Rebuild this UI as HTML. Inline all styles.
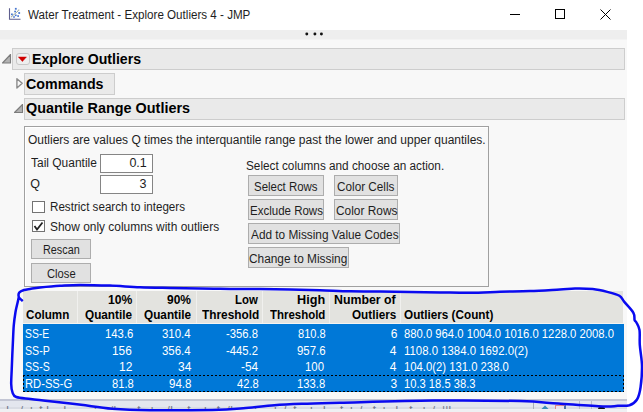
<!DOCTYPE html>
<html><head><meta charset="utf-8"><style>
html,body{margin:0;padding:0;width:643px;height:412px;overflow:hidden;background:#fff;position:relative}
.t{position:absolute;white-space:nowrap;line-height:0;font-family:"Liberation Sans",sans-serif;transform-origin:0 0}
.b{position:absolute;box-sizing:border-box}
</style></head><body>
<!-- title bar -->
<div class="b" style="left:0;top:0;width:643px;height:30px;background:#fff"></div>
<!-- app icon -->
<svg class="b" style="left:5px;top:4px" width="20" height="20" viewBox="0 0 20 20">
<path d="M4.5 4.3 V15.3 H15.5" fill="none" stroke="#5e5e8e" stroke-width="1.1"/>
<path d="M6.3 13.1 L14.6 5.3" stroke="#8a9a8a" stroke-width="1.1" stroke-dasharray="1 0.6"/>
<g fill="#4a78d0"><rect x="9.9" y="3.9" width="1.8" height="1.8"/><rect x="9.2" y="6.7" width="1.8" height="1.6"/><rect x="13.3" y="8.1" width="1.8" height="1.8"/><rect x="6" y="9.5" width="1.8" height="1.7"/><rect x="9.9" y="10.5" width="1.7" height="1.6"/><rect x="12.3" y="11.2" width="1.7" height="1.7"/><rect x="8.2" y="12.2" width="1.6" height="1.6"/></g>
</svg>
<!-- window controls -->
<div class="b" style="left:510px;top:14px;width:10px;height:1px;background:#000"></div>
<div class="b" style="left:555px;top:9px;width:10px;height:10px;border:1px solid #000"></div>
<svg class="b" style="left:600px;top:9px" width="11" height="11" viewBox="0 0 11 11"><path d="M0.5 0.5 L10.5 10.5 M10.5 0.5 L0.5 10.5" stroke="#000" stroke-width="1"/></svg>
<!-- toolbar band -->
<div class="b" style="left:0;top:30px;width:627px;height:9px;background:#eeeeee"></div>
<div class="b" style="left:0;top:39px;width:627px;height:1px;background:#f3f3f3"></div>
<svg class="b" style="left:300px;top:28px" width="30" height="12"><g fill="#111"><circle cx="6.8" cy="6" r="1.45"/><circle cx="14.9" cy="6" r="1.45"/><circle cx="21.4" cy="6" r="1.45"/></g></svg>
<!-- content bg -->
<div class="b" style="left:0;top:40px;width:627px;height:359px;background:#f8f8f8"></div>
<!-- outline header boxes -->
<div class="b" style="left:12px;top:48px;width:613px;height:22px;background:#eaeaea;border:1px solid #cdcdcd"></div>
<div class="b" style="left:24px;top:73px;width:91px;height:22px;background:#eaeaea;border:1px solid #cdcdcd"></div>
<div class="b" style="left:24px;top:98px;width:601px;height:22px;background:#eaeaea;border:1px solid #cdcdcd"></div>
<!-- disclosure triangles -->
<svg class="b" style="left:0;top:50px" width="14" height="16"><path d="M2.5 13 L10.5 4.5 L10.5 13 Z" fill="#b2b2b2" stroke="#7c7c7c" stroke-width="1.1" stroke-linejoin="round"/></svg>
<svg class="b" style="left:13px;top:76px" width="12" height="16"><path d="M3.9 2.7 L9.2 7.3 L3.9 12 Z" fill="none" stroke="#8c8c8c" stroke-width="1.4" stroke-linejoin="round"/></svg>
<svg class="b" style="left:12px;top:100px" width="14" height="16"><path d="M2.5 12.5 L10.5 4.5 L10.5 12.5 Z" fill="#b2b2b2" stroke="#7c7c7c" stroke-width="1.1" stroke-linejoin="round"/></svg>
<!-- red triangle button -->
<div class="b" style="left:16px;top:53px;width:14px;height:12px;border:1px solid #c8c8c8;border-radius:3px;background:#efefef"></div>
<svg class="b" style="left:16px;top:53px" width="14" height="12"><path d="M2.3 3.9 L10.5 3.9 L6.4 8.6 Z" fill="#d00000" stroke="#d00000" stroke-width="0.4" stroke-linejoin="round"/></svg>
<!-- panel -->
<div class="b" style="left:24px;top:126px;width:465px;height:161px;border:1px solid #a0a0a0;background:#f8f8f8;box-shadow:inset 1px 1px 0 #fff"></div>
<!-- text boxes -->
<div class="b" style="left:100px;top:154px;width:53px;height:19px;border:1px solid #858585;background:#fff"></div>
<div class="b" style="left:100px;top:175px;width:53px;height:19px;border:1px solid #858585;background:#fff"></div>
<!-- checkboxes -->
<div class="b" style="left:32px;top:201px;width:13px;height:12px;border:1px solid #737373;background:#fff"></div>
<div class="b" style="left:32px;top:220px;width:13px;height:12px;border:1px solid #737373;background:#fff"></div>
<svg class="b" style="left:32px;top:220px" width="13" height="12"><path d="M2.5 6 L5 9.5 L10.5 2.5" fill="none" stroke="#222" stroke-width="1.8"/></svg>
<!-- buttons -->
<div class="b" style="left:31px;top:239px;width:60px;height:20px;border:1px solid #adadad;background:#e1e1e1"></div>
<div class="b" style="left:31px;top:263px;width:60px;height:20px;border:1px solid #adadad;background:#e1e1e1"></div>
<div class="b" style="left:248px;top:175px;width:76px;height:21px;border:1px solid #adadad;background:#e1e1e1"></div>
<div class="b" style="left:334px;top:175px;width:64px;height:21px;border:1px solid #adadad;background:#e1e1e1"></div>
<div class="b" style="left:248px;top:199px;width:76px;height:21px;border:1px solid #adadad;background:#e1e1e1"></div>
<div class="b" style="left:334px;top:199px;width:64px;height:21px;border:1px solid #adadad;background:#e1e1e1"></div>
<div class="b" style="left:248px;top:223px;width:152px;height:21px;border:1px solid #adadad;background:#e1e1e1"></div>
<div class="b" style="left:248px;top:247px;width:101px;height:21px;border:1px solid #adadad;background:#e1e1e1"></div>
<!-- table header -->
<div class="b" style="left:23px;top:291px;width:600px;height:32px;background:#e3e3df"></div>
<div class="b" style="left:23px;top:323px;width:601px;height:1px;background:#f4f4f2"></div>
<div class="b" style="left:77px;top:291px;width:1px;height:32px;background:#f0f0ee"></div>
<div class="b" style="left:136px;top:291px;width:1px;height:32px;background:#f0f0ee"></div>
<div class="b" style="left:196px;top:291px;width:1px;height:32px;background:#f0f0ee"></div>
<div class="b" style="left:262px;top:291px;width:1px;height:32px;background:#f0f0ee"></div>
<div class="b" style="left:329px;top:291px;width:1px;height:32px;background:#f0f0ee"></div>
<div class="b" style="left:400px;top:291px;width:1px;height:32px;background:#f0f0ee"></div>
<!-- rows -->
<div class="b" style="left:23px;top:324px;width:601px;height:68px;background:#0078d7"></div>
<div class="b" style="left:23px;top:375px;width:601px;height:1px;background:repeating-linear-gradient(90deg,#000 0 2px,transparent 2px 4px)"></div>
<div class="b" style="left:23px;top:391px;width:601px;height:1px;background:repeating-linear-gradient(90deg,#000 0 2px,transparent 2px 4px)"></div>
<div class="b" style="left:23px;top:375px;width:1px;height:17px;background:repeating-linear-gradient(180deg,#000 0 2px,transparent 2px 4px)"></div>
<div class="b" style="left:623px;top:375px;width:1px;height:17px;background:repeating-linear-gradient(180deg,#000 0 2px,transparent 2px 4px)"></div>
<!-- status bar -->
<div class="b" style="left:0;top:399px;width:627px;height:2px;background:#c3c6d4"></div>
<div class="b" style="left:0;top:401px;width:627px;height:7.5px;background:#e3e6ee"></div>
<div class="b" style="left:0;top:408.5px;width:627px;height:3.5px;background:#eff0f3"></div>
<div class="b" style="left:0;top:407px;width:627px;height:1.5px;background:#d9dce4"></div>
<div class="b" style="left:0;top:405.5px;width:520px;height:3px;overflow:hidden;opacity:0.7">
<div class="t" style="left:6px;top:4.6px;font-size:12px;color:#4a5068;white-space:pre">F  /  i  t F   F       i    /F     t   i    /F   t    i   t  /F     t     i  /  t    i   F   t  i  /   t  i   F  t   i  /  ||F</div>
</div>
<div class="b" style="left:533px;top:401px;width:1px;height:7.5px;background:#a8acb8"></div>
<div class="b" style="left:579px;top:401px;width:1px;height:7.5px;background:#b8bcc8"></div>
<div class="b" style="left:591px;top:401px;width:1px;height:7.5px;background:#b8bcc8"></div>
<div class="b" style="left:0;top:401px;width:627px;height:7.5px;overflow:hidden">
<svg style="position:absolute;left:538px;top:3px" width="14" height="9"><path d="M1.5 8.5 L7 3 L12.5 8.5" fill="none" stroke="#3a8ab8" stroke-width="2.2"/></svg>
<div class="b" style="left:555px;top:3.5px;width:11px;height:8px;border:1px solid #e08a8a;border-right:2px solid #5070a0;background:#ece4ea"></div>
<div class="b" style="left:597.5px;top:5.5px;width:7.5px;height:4px;background:#111;border-radius:3px"></div>
</div>

<div class="t" style="left:28.00px;top:14.56px;font-size:12.5px;font-weight:normal;color:#1e1e1e;transform:scaleX(0.9297);">Water Treatment - Explore Outliers 4 - JMP</div>
<div class="t" style="left:32.06px;top:59.00px;font-size:15px;font-weight:bold;color:#000;transform:scaleX(0.9412);">Explore Outliers</div>
<div class="t" style="left:25.85px;top:84.00px;font-size:15px;font-weight:bold;color:#000;transform:scaleX(0.9488);">Commands</div>
<div class="t" style="left:25.84px;top:108.20px;font-size:15px;font-weight:bold;color:#000;transform:scaleX(0.9598);">Quantile Range Outliers</div>
<div class="t" style="left:28.04px;top:139.56px;font-size:12.5px;font-weight:normal;color:#1e1e1e;transform:scaleX(0.9602);">Outliers are values Q times the interquantile range past the lower and upper quantiles.</div>
<div class="t" style="left:31.30px;top:162.86px;font-size:12.5px;font-weight:normal;color:#1e1e1e;transform:scaleX(0.9574);">Tail Quantile</div>
<div class="t" style="left:30.30px;top:184.26px;font-size:12.5px;font-weight:normal;color:#1e1e1e;">Q</div>
<div class="t" style="left:129.40px;top:162.86px;font-size:12.5px;font-weight:normal;color:#1e1e1e;">0.1</div>
<div class="t" style="left:139.40px;top:184.26px;font-size:12.5px;font-weight:normal;color:#1e1e1e;">3</div>
<div class="t" style="left:49.57px;top:207.46px;font-size:12.5px;font-weight:normal;color:#1e1e1e;transform:scaleX(0.9299);">Restrict search to integers</div>
<div class="t" style="left:49.55px;top:226.66px;font-size:12.5px;font-weight:normal;color:#1e1e1e;transform:scaleX(0.9545);">Show only columns with outliers</div>
<div class="t" style="left:245.56px;top:166.06px;font-size:12.5px;font-weight:normal;color:#1e1e1e;transform:scaleX(0.9411);">Select columns and choose an action.</div>
<div class="t" style="left:254.09px;top:186.96px;font-size:12.5px;font-weight:normal;color:#1e1e1e;transform:scaleX(0.9147);">Select Rows</div>
<div class="t" style="left:337.26px;top:186.96px;font-size:12.5px;font-weight:normal;color:#1e1e1e;transform:scaleX(0.9400);">Color Cells</div>
<div class="t" style="left:249.58px;top:210.96px;font-size:12.5px;font-weight:normal;color:#1e1e1e;transform:scaleX(0.9205);">Exclude Rows</div>
<div class="t" style="left:335.85px;top:210.96px;font-size:12.5px;font-weight:normal;color:#1e1e1e;transform:scaleX(0.9508);">Color Rows</div>
<div class="t" style="left:250.60px;top:234.96px;font-size:12.5px;font-weight:normal;color:#1e1e1e;transform:scaleX(0.9455);">Add to Missing Value Codes</div>
<div class="t" style="left:248.85px;top:258.96px;font-size:12.5px;font-weight:normal;color:#1e1e1e;transform:scaleX(0.9490);">Change to Missing</div>
<div class="t" style="left:43.03px;top:250.16px;font-size:12.5px;font-weight:normal;color:#1e1e1e;transform:scaleX(0.8659);">Rescan</div>
<div class="t" style="left:46.60px;top:274.26px;font-size:12.5px;font-weight:normal;color:#1e1e1e;transform:scaleX(0.8968);">Close</div>
<div class="t" style="left:25.60px;top:315.34px;font-size:12px;font-weight:bold;color:#000;transform:scaleX(0.9682);">Column</div>
<div class="t" style="left:107.69px;top:299.64px;font-size:12px;font-weight:bold;color:#000;transform:scaleX(1.0130);">10%</div>
<div class="t" style="left:85.00px;top:315.34px;font-size:12px;font-weight:bold;color:#000;transform:scaleX(0.9792);">Quantile</div>
<div class="t" style="left:167.30px;top:299.64px;font-size:12px;font-weight:bold;color:#000;transform:scaleX(0.9958);">90%</div>
<div class="t" style="left:144.10px;top:315.34px;font-size:12px;font-weight:bold;color:#000;transform:scaleX(0.9812);">Quantile</div>
<div class="t" style="left:235.15px;top:299.64px;font-size:12px;font-weight:bold;color:#000;transform:scaleX(0.9478);">Low</div>
<div class="t" style="left:201.70px;top:315.34px;font-size:12px;font-weight:bold;color:#000;transform:scaleX(0.9860);">Threshold</div>
<div class="t" style="left:296.74px;top:299.64px;font-size:12px;font-weight:bold;color:#000;transform:scaleX(1.0560);">High</div>
<div class="t" style="left:269.80px;top:315.34px;font-size:12px;font-weight:bold;color:#000;transform:scaleX(0.9544);">Threshold</div>
<div class="t" style="left:334.47px;top:299.64px;font-size:12px;font-weight:bold;color:#000;transform:scaleX(1.0271);">Number of</div>
<div class="t" style="left:352.20px;top:315.34px;font-size:12px;font-weight:bold;color:#000;transform:scaleX(0.9756);">Outliers</div>
<div class="t" style="left:403.90px;top:315.34px;font-size:12px;font-weight:bold;color:#000;transform:scaleX(0.9780);">Outliers (Count)</div>
<div class="t" style="left:24.74px;top:333.84px;font-size:12px;font-weight:normal;color:#fff;transform:scaleX(0.8630);">SS-E</div>
<div class="t" style="left:104.56px;top:333.84px;font-size:12px;font-weight:normal;color:#fff;transform:scaleX(0.9448);">143.6</div>
<div class="t" style="left:162.34px;top:333.84px;font-size:12px;font-weight:normal;color:#fff;transform:scaleX(0.9552);">310.4</div>
<div class="t" style="left:226.00px;top:333.84px;font-size:12px;font-weight:normal;color:#fff;transform:scaleX(0.9382);">-356.8</div>
<div class="t" style="left:297.70px;top:333.84px;font-size:12px;font-weight:normal;color:#fff;transform:scaleX(0.9200);">810.8</div>
<div class="t" style="left:390.70px;top:333.84px;font-size:12px;font-weight:normal;color:#fff;">6</div>
<div class="t" style="left:404.20px;top:333.84px;font-size:12px;font-weight:normal;color:#fff;transform:scaleX(0.9390);">880.0 964.0 1004.0 1016.0 1228.0 2008.0</div>
<div class="t" style="left:24.71px;top:350.54px;font-size:12px;font-weight:normal;color:#fff;transform:scaleX(0.8852);">SS-P</div>
<div class="t" style="left:112.32px;top:350.54px;font-size:12px;font-weight:normal;color:#fff;transform:scaleX(0.9842);">156</div>
<div class="t" style="left:162.34px;top:350.54px;font-size:12px;font-weight:normal;color:#fff;transform:scaleX(0.9552);">356.4</div>
<div class="t" style="left:226.00px;top:350.54px;font-size:12px;font-weight:normal;color:#fff;transform:scaleX(0.9382);">-445.2</div>
<div class="t" style="left:296.75px;top:350.54px;font-size:12px;font-weight:normal;color:#fff;transform:scaleX(0.9517);">957.6</div>
<div class="t" style="left:389.70px;top:350.54px;font-size:12px;font-weight:normal;color:#fff;">4</div>
<div class="t" style="left:403.85px;top:350.54px;font-size:12px;font-weight:normal;color:#fff;transform:scaleX(0.9496);">1108.0 1384.0 1692.0(2)</div>
<div class="t" style="left:24.71px;top:367.24px;font-size:12px;font-weight:normal;color:#fff;transform:scaleX(0.8852);">SS-S</div>
<div class="t" style="left:119.00px;top:367.24px;font-size:12px;font-weight:normal;color:#fff;">12</div>
<div class="t" style="left:178.00px;top:367.24px;font-size:12px;font-weight:normal;color:#fff;">34</div>
<div class="t" style="left:241.10px;top:367.24px;font-size:12px;font-weight:normal;color:#fff;transform:scaleX(0.9882);">-54</div>
<div class="t" style="left:305.45px;top:367.24px;font-size:12px;font-weight:normal;color:#fff;transform:scaleX(0.9474);">100</div>
<div class="t" style="left:389.70px;top:367.24px;font-size:12px;font-weight:normal;color:#fff;">4</div>
<div class="t" style="left:403.86px;top:367.24px;font-size:12px;font-weight:normal;color:#fff;transform:scaleX(0.9409);">104.0(2) 131.0 238.0</div>
<div class="t" style="left:24.67px;top:383.94px;font-size:12px;font-weight:normal;color:#fff;transform:scaleX(0.9327);">RD-SS-G</div>
<div class="t" style="left:111.50px;top:383.94px;font-size:12px;font-weight:normal;color:#fff;transform:scaleX(0.9304);">81.8</div>
<div class="t" style="left:168.84px;top:383.94px;font-size:12px;font-weight:normal;color:#fff;transform:scaleX(0.9636);">94.8</div>
<div class="t" style="left:236.50px;top:383.94px;font-size:12px;font-weight:normal;color:#fff;transform:scaleX(0.9304);">42.8</div>
<div class="t" style="left:297.16px;top:383.94px;font-size:12px;font-weight:normal;color:#fff;transform:scaleX(0.9379);">133.8</div>
<div class="t" style="left:390.50px;top:383.94px;font-size:12px;font-weight:normal;color:#fff;">3</div>
<div class="t" style="left:403.87px;top:383.94px;font-size:12px;font-weight:normal;color:#fff;transform:scaleX(0.9320);">10.3 18.5 38.3</div>
<svg style="position:absolute;left:0;top:0" width="643" height="412"><path d="M22.0 300.4 C21.5 299.8 19.2 298.3 18.8 297.0 C18.4 295.7 18.4 293.8 19.3 292.6 C20.2 291.4 22.2 290.6 24.0 290.0 C25.8 289.4 27.3 289.3 30.0 288.9 C32.7 288.5 35.0 288.0 40.0 287.5 C45.0 287.0 53.3 286.2 60.0 285.8 C66.7 285.4 71.7 284.9 80.0 284.9 C88.3 284.9 100.0 285.2 110.0 285.6 C120.0 286.0 130.0 286.8 140.0 287.2 C150.0 287.6 160.0 287.7 170.0 287.9 C180.0 288.1 190.0 288.4 200.0 288.6 C210.0 288.8 220.0 288.8 230.0 288.9 C240.0 289.0 250.0 288.9 260.0 289.0 C270.0 289.1 280.0 289.3 290.0 289.5 C300.0 289.7 310.0 289.9 320.0 290.2 C330.0 290.5 340.0 291.1 350.0 291.3 C360.0 291.5 370.0 291.5 380.0 291.6 C390.0 291.7 400.0 291.9 410.0 292.0 C420.0 292.1 430.0 292.3 440.0 292.4 C450.0 292.5 460.0 292.8 470.0 292.7 C480.0 292.6 490.0 292.1 500.0 291.8 C510.0 291.5 520.0 291.5 530.0 291.1 C540.0 290.7 552.5 289.9 560.0 289.5 C567.5 289.1 569.5 288.7 575.0 288.6 C580.5 288.5 587.3 288.6 592.7 289.1 C598.1 289.7 602.8 290.8 607.3 291.9 C611.8 293.0 616.6 294.1 619.4 295.8 C622.2 297.5 622.0 299.1 624.3 301.9 C626.6 304.7 631.7 309.8 633.4 312.8 C635.1 315.8 634.1 318.5 634.6 320.1 C635.1 321.7 635.6 320.9 636.4 322.5 C637.2 324.1 638.9 326.2 639.5 330.0 C640.1 333.8 639.4 339.0 639.8 345.0 C640.2 351.0 641.9 359.0 642.0 366.0 C642.1 373.0 641.4 381.4 640.6 387.0 C639.8 392.6 638.9 396.5 637.0 399.5 C635.1 402.5 632.7 404.1 629.5 405.2 C626.3 406.2 622.2 405.6 617.8 405.8 C613.4 406.0 612.9 406.9 603.0 406.5 C593.1 406.1 572.1 404.5 558.3 403.6 C544.5 402.7 540.8 401.6 520.0 401.1 C499.2 400.6 463.3 400.3 433.3 400.6 C403.3 400.9 361.3 402.2 340.0 402.7 C318.7 403.2 316.4 403.3 305.5 403.7 C294.6 404.1 284.8 404.4 274.4 405.2 C264.0 406.0 253.7 407.5 243.3 408.3 C232.9 409.1 227.8 409.6 212.2 409.9 C196.6 410.2 166.7 410.4 150.0 410.2 C133.3 410.0 123.7 409.6 112.2 408.7 C100.7 407.8 91.5 406.1 81.1 404.8 C70.7 403.6 58.4 402.2 50.0 401.2 C41.6 400.2 36.2 399.7 30.6 399.0 C25.0 398.3 19.3 398.1 16.3 397.0 C13.3 395.9 13.3 394.6 12.5 392.4 C11.7 390.2 11.3 387.7 11.2 384.0 C11.1 380.3 11.5 374.8 11.7 370.0 C11.9 365.2 12.1 360.0 12.3 355.0 C12.5 350.0 12.8 345.0 13.0 340.0 C13.2 335.0 13.4 329.7 13.8 325.0 C14.2 320.3 14.9 315.7 15.5 312.0 C16.1 308.3 16.9 305.5 17.5 303.0 C18.1 300.5 18.6 298.0 18.8 297.0" fill="none" stroke="#0a0af0" stroke-width="2.5" stroke-linecap="round" stroke-linejoin="round"/></svg>
</body></html>
